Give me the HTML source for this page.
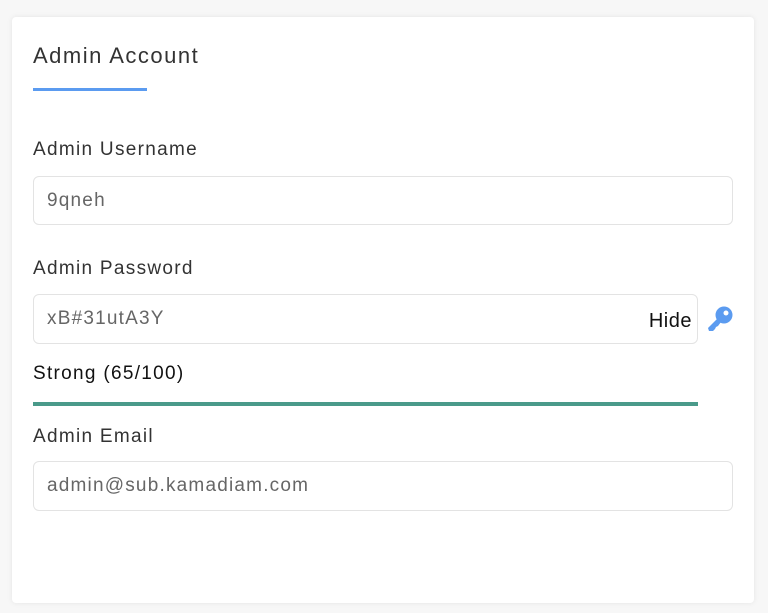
<!DOCTYPE html><html><head><style>
body{margin:0;width:768px;height:613px;background:#f7f7f7;font-family:"Liberation Sans",sans-serif;position:relative;overflow:hidden}
.card{position:absolute;left:12px;top:17px;width:742px;height:586px;background:#fff;border-radius:4px;box-shadow:0 0 6px rgba(0,0,0,.08)}
.a{position:absolute;color:#333;letter-spacing:1.3px}
.inp{position:absolute;border:1px solid #e3e3e3;border-radius:6px;background:#fff;box-sizing:border-box;font-size:19px;color:#666;padding-left:13px;line-height:48px;letter-spacing:1.2px}
</style></head><body>
<div class="card"></div>
<div class="a" style="left:33px;top:43px;font-size:22px;letter-spacing:1.5px">Admin Account</div>
<div style="position:absolute;left:33px;top:88px;width:114px;height:3px;background:#5b9bf0"></div>
<div class="a" style="left:33px;top:139px;font-size:19px">Admin Username</div>
<div class="inp" style="left:33px;top:176px;width:700px;height:49px">9qneh</div>
<div class="a" style="left:33px;top:258px;font-size:19px">Admin Password</div>
<div class="inp" style="left:33px;top:294px;width:665px;height:50px">xB#31utA3Y<span style="position:absolute;right:5px;top:2px;color:#111;font-size:20px;letter-spacing:0.5px">Hide</span></div>
<svg style="position:absolute;left:706px;top:306px" width="28" height="27" viewBox="0 0 28 27"><circle cx="18" cy="9" r="8.5" fill="#5b9bf0"/><circle cx="20" cy="7" r="2.5" fill="#fff"/><path d="M12 12 L2 22 L3 25 L7 25 L9 23 L10 21 L12 20 L15 16Z" fill="#5b9bf0"/></svg>
<div class="a" style="left:33px;top:363px;font-size:19px;color:#111">Strong (65/100)</div>
<div style="position:absolute;left:33px;top:402px;width:665px;height:4px;background:#4a9a8a"></div>
<div class="a" style="left:33px;top:426px;font-size:19px">Admin Email</div>
<div class="inp" style="left:33px;top:461px;width:700px;height:50px">admin@sub.kamadiam.com</div>
</body></html>
